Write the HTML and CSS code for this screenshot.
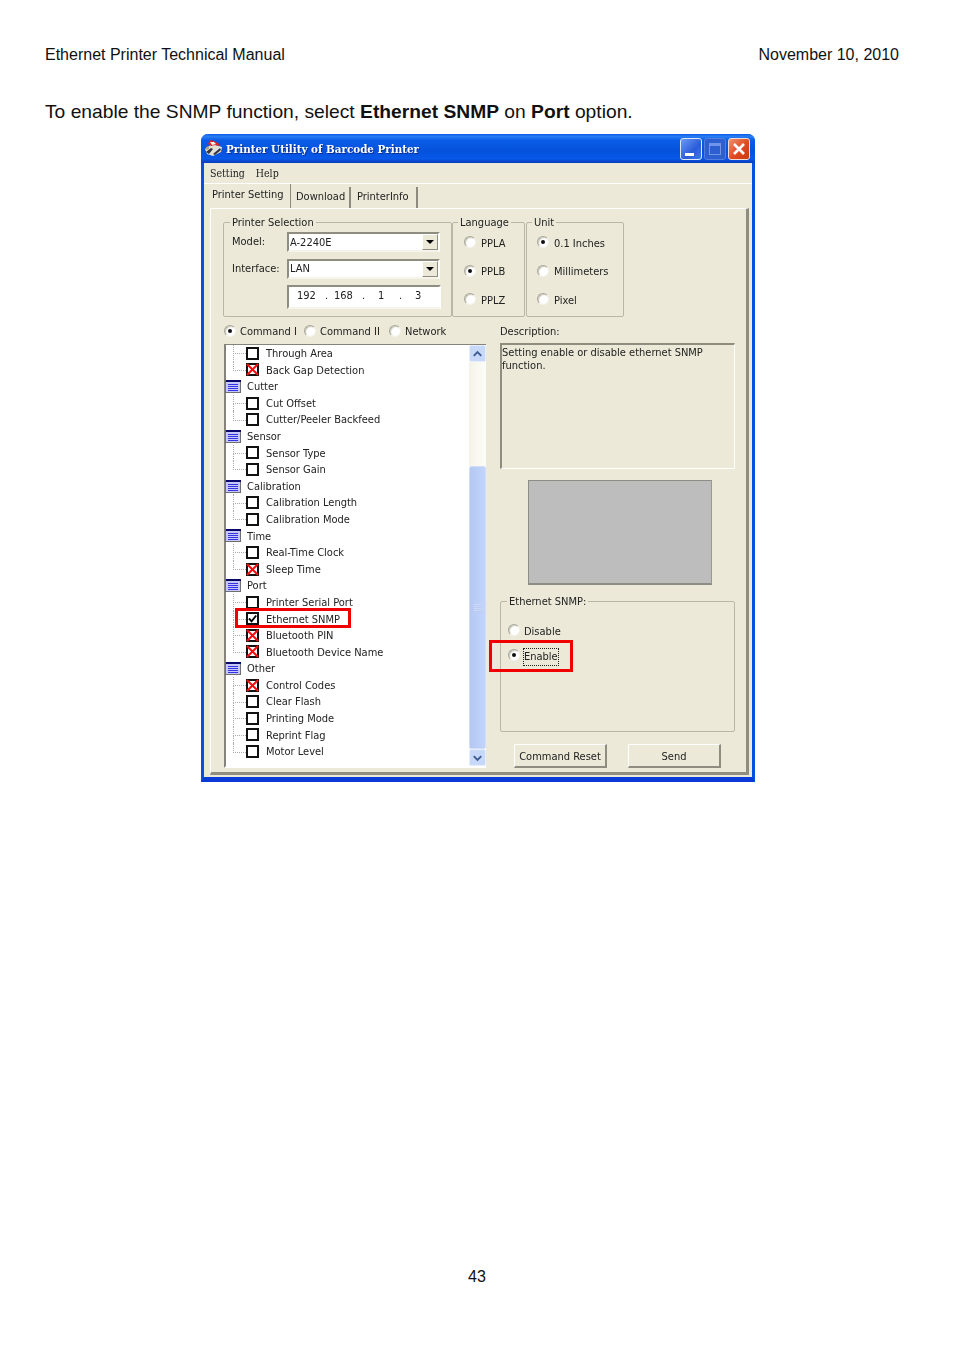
FILE: index.html
```html
<!DOCTYPE html>
<html lang="en">
<head>
<meta charset="utf-8">
<title>Ethernet Printer Technical Manual</title>
<link rel="stylesheet" href="styles.css">
</head>
<body>
<svg class="defs" width="0" height="0" aria-hidden="true">
  <symbol id="cb-x" viewBox="0 0 14 14"><path d="M1 1 13 13M13 1 1 13" stroke="#f01010" stroke-width="2.2" fill="none"/></symbol>
  <symbol id="cb-c" viewBox="0 0 14 14"><path d="M3.2 7 6 10 11 3.8" stroke="#000" stroke-width="2" fill="none"/></symbol>
  <symbol id="folder" viewBox="0 0 16 13">
    <rect x="0" y="0" width="16" height="13" fill="#6f6f6c"/>
    <rect x="1" y="0" width="15" height="2" fill="#08086c"/>
    <rect x="1" y="2" width="14" height="10" fill="#c6c8fa"/>
    <path d="M3 4.5h10M3 6.5h10M3 8.5h10M3 10.5h10" stroke="#3434e0" stroke-width="1"/>
  </symbol>
</svg>

<header class="doc-head"><span>Ethernet Printer Technical Manual</span><span>November 10, 2010</span></header>
<p class="intro">To enable the SNMP function, select <b>Ethernet SNMP</b> on <b>Port</b> option.</p>

<div class="window">
  <div class="titlebar">
    <svg class="app-icon" viewBox="0 0 18 16" width="18" height="16">
      <path d="M0 9 7 4l10 3-1 5-8 4-6-2z" fill="#e4e0d4"/>
      <path d="M3 4 5 0l4 1 4 2 2 3-5-1-4 1z" fill="#d8232a"/>
      <path d="M5 2l4 0 2 2-4 1z" fill="#f6f6f0"/>
      <path d="M1 12l5-4 2 1-4 5zM8 14l7-6 1 2-6 5z" fill="#36363e"/>
      <path d="M1 7l3-1v3L1 10z" fill="#a8a498"/>
    </svg>
    <span class="title-text">Printer Utility of Barcode Printer</span>
    <div class="win-btns">
      <span class="win-btn min"><i></i></span>
      <span class="win-btn max"><i></i></span>
      <span class="win-btn close"><svg viewBox="0 0 22 22" width="22" height="22"><path d="M6 6 16 16M16 6 6 16" stroke="#fff" stroke-width="2.6"/></svg></span>
    </div>
  </div>
  <div class="menubar"><span>Setting</span><span>Help</span></div>
  <div class="tabs">
    <span class="tab active">Printer Setting</span>
    <span class="tab t-dl">Download</span>
    <span class="tab t-info">PrinterInfo</span>
  </div>

  <div class="page">
    <div class="top-row">
      <fieldset class="group g-printer">
        <legend>Printer Selection</legend>
        <div class="printer-grid">
          <label>Model:</label>
          <div class="combo"><span>A-2240E</span><b class="arrow"></b></div>
          <label>Interface:</label>
          <div class="combo"><span>LAN</span><b class="arrow"></b></div>
          <span></span>
          <div class="ip"><span>192</span><span>.</span><span>168</span><span>.</span><span>1</span><span>.</span><span>3</span></div>
        </div>
      </fieldset>
      <fieldset class="group g-lang">
        <legend>Language</legend>
        <div class="radio-row"><i class="radio"></i>PPLA</div>
        <div class="radio-row"><i class="radio on"></i>PPLB</div>
        <div class="radio-row"><i class="radio"></i>PPLZ</div>
      </fieldset>
      <fieldset class="group g-unit">
        <legend>Unit</legend>
        <div class="radio-row"><i class="radio on"></i>0.1 Inches</div>
        <div class="radio-row"><i class="radio"></i>Millimeters</div>
        <div class="radio-row"><i class="radio"></i>Pixel</div>
      </fieldset>
    </div>

    <div class="main-row">
      <div class="left-col">
        <div class="cmd-row">
          <span class="cmd c1"><i class="radio on"></i>Command I</span>
          <span class="cmd c2"><i class="radio"></i>Command II</span>
          <span class="cmd"><i class="radio"></i>Network</span>
        </div>
        <div class="tree-box">
          <ul class="tree">
            <li class="leaf"><i class="cb"></i>Through Area</li>
            <li class="leaf last"><i class="cb"><svg><use href="#cb-x"/></svg></i>Back Gap Detection</li>
            <li class="node"><svg class="ficon"><use href="#folder"/></svg>Cutter</li>
            <li class="leaf"><i class="cb"></i>Cut Offset</li>
            <li class="leaf last"><i class="cb"></i>Cutter/Peeler Backfeed</li>
            <li class="node"><svg class="ficon"><use href="#folder"/></svg>Sensor</li>
            <li class="leaf"><i class="cb"></i>Sensor Type</li>
            <li class="leaf last"><i class="cb"></i>Sensor Gain</li>
            <li class="node"><svg class="ficon"><use href="#folder"/></svg>Calibration</li>
            <li class="leaf"><i class="cb"></i>Calibration Length</li>
            <li class="leaf last"><i class="cb"></i>Calibration Mode</li>
            <li class="node"><svg class="ficon"><use href="#folder"/></svg>Time</li>
            <li class="leaf"><i class="cb"></i>Real-Time Clock</li>
            <li class="leaf last"><i class="cb"><svg><use href="#cb-x"/></svg></i>Sleep Time</li>
            <li class="node"><svg class="ficon"><use href="#folder"/></svg>Port</li>
            <li class="leaf"><i class="cb"></i>Printer Serial Port</li>
            <li class="leaf"><i class="cb"><svg><use href="#cb-c"/></svg></i>Ethernet SNMP</li>
            <li class="leaf"><i class="cb"><svg><use href="#cb-x"/></svg></i>Bluetooth PIN</li>
            <li class="leaf last"><i class="cb"><svg><use href="#cb-x"/></svg></i>Bluetooth Device Name</li>
            <li class="node"><svg class="ficon"><use href="#folder"/></svg>Other</li>
            <li class="leaf"><i class="cb"><svg><use href="#cb-x"/></svg></i>Control Codes</li>
            <li class="leaf"><i class="cb"></i>Clear Flash</li>
            <li class="leaf"><i class="cb"></i>Printing Mode</li>
            <li class="leaf"><i class="cb"></i>Reprint Flag</li>
            <li class="leaf last"><i class="cb"></i>Motor Level</li>
          </ul>
          <div class="scrollbar">
            <span class="sb-btn"><svg viewBox="0 0 16 16" width="16" height="16"><path d="M4 10 8 6l4 4" stroke="#3c5a94" stroke-width="2" fill="none"/></svg></span>
            <span class="sb-track"></span>
            <span class="sb-thumb"><i></i></span>
            <span class="sb-btn"><svg viewBox="0 0 16 16" width="16" height="16"><path d="M4 6 8 10l4-4" stroke="#3c5a94" stroke-width="2" fill="none"/></svg></span>
          </div>
        </div>
      </div>

      <div class="right-col">
        <div class="desc-label">Description:</div>
        <div class="desc-box">Setting enable or disable ethernet SNMP function.</div>
        <div class="preview"></div>
        <fieldset class="group g-snmp">
          <legend>Ethernet SNMP:</legend>
          <div class="snmp-row"><i class="radio"></i><span>Disable</span></div>
          <div class="snmp-row"><i class="radio on"></i><span class="focus">Enable</span></div>
        </fieldset>
        <div class="buttons"><span class="btn">Command Reset</span><span class="btn">Send</span></div>
      </div>
    </div>
  </div>
  <div class="mark mark-a"></div>
  <div class="mark mark-b"></div>
</div>

<footer class="page-no">43</footer>
</body>
</html>
```
FILE: styles.css
```css
* { box-sizing: border-box; }
html, body { margin: 0; padding: 0; }
body {
  width: 954px; height: 1351px; background: #fff; color: #111;
  font-family: "Liberation Sans", Arial, sans-serif;
  display: flex; flex-direction: column; overflow: hidden;
}
.defs { position: absolute; }
.doc-head {
  display: flex; justify-content: space-between;
  padding: 46px 55px 0 45px; font-size: 16px; line-height: 18px;
}
.intro { margin: 37px 0 0 45px; font-size: 19.24px; line-height: 21px; }
.page-no { margin-top: auto; padding-bottom: 65px; text-align: center; font-size: 16px; line-height: 18px; }

.window {
  position: relative; width: 554px; height: 648px; margin: 12px 0 0 201px;
  background: #ece9d8; border: 3px solid #0a50e0; border-top: 0;
  border-bottom: 5px solid #0a3ad8; border-radius: 7px 7px 0 0;
  font-family: "DejaVu Sans", sans-serif; font-stretch: condensed; font-size: 11px; color: #222;
  filter: blur(0.35px); display: flex; flex-direction: column;
}
.titlebar {
  height: 29px; margin: 0 -3px; padding: 0 5px 0 4px; display: flex; align-items: center;
  border-radius: 7px 7px 0 0;
  background: linear-gradient(#0a58e8 0, #2a7ef4 8%, #0a5ce6 22%, #0552dc 60%, #0858ea 85%, #0a3cb8 100%);
}
.app-icon { flex: none; margin-top: -2px; }
.title-text {
  margin-left: 3px; color: #fff; font: bold condensed 11.5px/16px "DejaVu Serif", serif; white-space: nowrap;
  text-shadow: 1px 1px 0 #0a2c90;
}
.win-btns { margin-left: auto; display: flex; gap: 2px; }
.win-btn {
  width: 22px; height: 22px; border: 1px solid #dfe8fb; border-radius: 3px; display: flex; position: relative;
  background: linear-gradient(135deg, #6a9af4, #2a5cd8 60%, #3f78ee);
}
.win-btn.min i { width: 9px; height: 3px; background: #fff; margin: 14px 0 0 4px; }
.win-btn.max { background: #2e5fd0; border-color: #4f7ee0; }
.win-btn.max i { width: 12px; height: 12px; margin: 4px; border: 1px solid #6f96e8; border-top-width: 3px; }
.win-btn.close { background: linear-gradient(135deg, #f09070, #e04a22 55%, #c83810); border-color: #f0dcd4; }
.win-btn.close svg { margin: -1px; }

.menubar {
  height: 21px; padding: 2px 0 0 6px; display: flex; gap: 11px;
  font: condensed 10.5px/17px "DejaVu Serif", serif; border-bottom: 1px solid #fff;
}
.tabs { height: 24px; padding-left: 3px; display: flex; align-items: flex-end; }
.tab {
  height: 21px; line-height: 20px; padding-left: 5px;
  border-right: 2px solid #8d8b7e; white-space: nowrap;
}
.tab.active { width: 84px; height: 24px; line-height: 22px; border-right: 1px solid #8d8b7e; }
.t-dl { width: 60px; }
.t-info { width: 67px; padding-left: 6px; }

.page {
  margin: 0 3px 0 6px; height: 567px; padding: 6px 0 0 12px;
  border-top: 1px solid #fff; border-left: 1px solid #fff;
  border-right: 3px solid #8f8d80; border-bottom: 3px solid #8f8d80;
}
.top-row { display: flex; height: 102px; }
.group { margin: 0; padding: 0; border: 1px solid #bab7a6; border-radius: 2px; min-width: 0; }
.group legend { margin-left: 6px; padding: 0 2px; line-height: 14px; font-size: 11px; transform: translateY(1px); }
.g-printer { width: 229px; height: 102px; }
.g-lang { width: 73px; height: 102px; padding: 0 0 0 11px; }
.g-lang legend { margin-left: -6px; }
.g-unit { width: 98px; height: 102px; margin-left: 1px; padding: 0 0 0 10px; }
.g-unit legend { margin-left: -5px; }

.printer-grid {
  display: grid; grid-template-columns: 55px 153px; grid-auto-rows: 26.5px; padding: 3px 0 0 8px;
  align-items: start;
}
.printer-grid label { line-height: 20px; }
.combo {
  height: 20px; background: #fff; display: flex; align-items: center; justify-content: space-between;
  border: 2px solid #8f8d80; border-right-color: #fff; border-bottom-color: #f5f3ea; padding-left: 1px;
}
.arrow {
  width: 16px; height: 16px; background: #ece9d8; position: relative; flex: none;
  border: 1px solid #8f8d80; border-top-color: #fff; border-left-color: #fff;
}
.arrow::after {
  content: ""; position: absolute; left: 3px; top: 5px;
  border: 4px solid transparent; border-top: 4px solid #000; border-bottom: 0;
}
.ip {
  width: 154px; height: 24px; background: #fff; display: flex; align-items: center; padding: 0 0 3px 8px;
  border: 2px solid #8f8d80; border-right-color: #fff; border-bottom-color: #f5f3ea;
}
.ip span:nth-child(1) { width: 28px; }
.ip span:nth-child(2) { width: 9px; }
.ip span:nth-child(3) { width: 28px; }
.ip span:nth-child(4) { width: 16px; }
.ip span:nth-child(5) { width: 21px; }
.ip span:nth-child(6) { width: 16px; }

.radio {
  display: inline-block; flex: none; position: relative; width: 12px; height: 12px; border-radius: 50%;
  margin-top: -2px;
  background: #fff; border: 1px solid #a8a698; border-right-color: #f4f2ea; border-bottom-color: #f4f2ea;
  box-shadow: inset 1px 1px 1px #c8c6b8;
}
.radio.on::after {
  content: ""; position: absolute; left: 3px; top: 3px; width: 4px; height: 4px; border-radius: 50%; background: #111;
}
.radio-row { height: 28.5px; display: flex; align-items: center; gap: 5px; }

.main-row { display: flex; margin-top: 7px; }
.left-col { width: 262px; margin-left: 1px; }
.cmd-row { height: 20px; display: flex; padding: 0 0 5px 0; align-items: center; }
.cmd { display: flex; align-items: center; gap: 4px; white-space: nowrap; }
.c1 { width: 80px; }
.c2 { width: 85px; }
.tree-box {
  height: 424px; display: flex; background: #fff;
  border: 2px solid #85837a; border-top-width: 1px; border-right: 0; border-bottom-color: #fff;
}
.tree { flex: 1; margin: 0; padding: 0; list-style: none; }
.tree li {
  position: relative; height: 16.6px; padding-top: 2px; line-height: 14.6px;
  display: flex; align-items: center; white-space: nowrap;
}
.ficon { width: 16px; height: 13px; margin: -2px 6px 0 -1px; flex: none; }
.leaf { padding-left: 20px; }
.leaf::before {
  content: ""; position: absolute; left: 7px; top: 0; width: 12px; height: 50%;
  border-left: 1px dotted #aaa; border-bottom: 1px dotted #aaa;
}
.leaf:not(.last)::after {
  content: ""; position: absolute; left: 7px; top: 50%; height: 50%; border-left: 1px dotted #aaa;
}
.cb {
  width: 13px; height: 13px; margin: -2px 7px 0 0; flex: none; background: #fff; border: 2px solid #111; position: relative;
}
.cb svg { position: absolute; left: -2px; top: -2px; width: 13px; height: 13px; }
.scrollbar { width: 17px; flex: none; display: flex; flex-direction: column; }
.sb-btn {
  height: 17px; flex: none; background: #c8d8f8; border: 1px solid #e6eefc; border-radius: 2px; display: flex;
}
.sb-track { height: 104px; flex: none; background: linear-gradient(90deg, #f4f2e8, #fdfdf9); }
.sb-thumb {
  flex: 1; background: linear-gradient(90deg, #b4c8f4, #c2d4fa); border: 1px solid #d2def8; border-radius: 2px;
  display: flex; align-items: center; justify-content: center;
}
.sb-thumb i { width: 8px; height: 8px; background: repeating-linear-gradient(#ccd9f6 0 1px, #b8ccf4 1px 2px); }

.right-col { margin-left: 14px; width: 235px; }
.desc-label { height: 19px; line-height: 15px; }
.desc-box {
  height: 126px; line-height: 13px; padding-top: 1px;
  border: 2px solid #8f8d80; border-right: 1px solid #fff; border-bottom: 1px solid #fff;
}
.preview {
  width: 184px; height: 105px; margin: 11px 0 0 28px; background: #bdbdbd;
  border: 1px solid #8d8d88; border-bottom-width: 2px; border-right-color: #9a9a94;
}
.g-snmp { height: 138px; margin-top: 9px; padding: 11px 0 0 7px; }
.g-snmp legend { margin-left: -1px; }
.snmp-row { height: 25px; display: flex; align-items: center; gap: 4px; }
.snmp-row .radio { margin-top: -4px; }
.focus { outline: 1px dotted #222; line-height: 16px; }
.buttons { display: flex; gap: 21px; margin-top: 12px; padding-left: 14px; }
.btn {
  width: 93px; height: 24px; text-align: center; line-height: 23px;
  border: 1px solid #fff; border-right: 2px solid #8f8d80; border-bottom: 2px solid #8f8d80;
}
.mark { position: absolute; border: 3px solid #f00000; }
.mark-a { left: 31px; top: 474px; width: 116px; height: 20px; }
.mark-b { left: 285px; top: 506px; width: 84px; height: 32px; }
```
